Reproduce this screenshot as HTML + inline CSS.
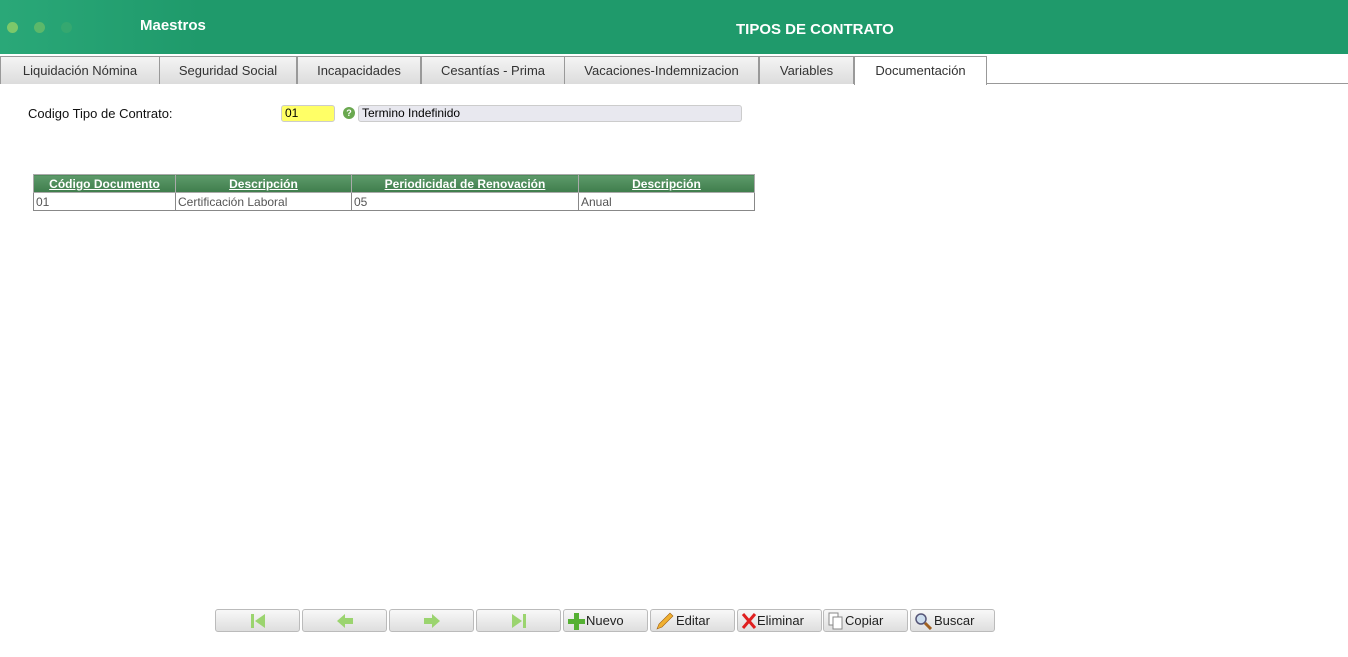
<!DOCTYPE html>
<html><head><meta charset="utf-8"><style>
*{margin:0;padding:0;box-sizing:border-box}
body{width:1348px;height:657px;background:#fff;font-family:"Liberation Sans",sans-serif;position:relative;overflow:hidden}
.hdr{position:absolute;left:0;top:0;width:1348px;height:54px;background:linear-gradient(90deg,#2aa878 0,#1f9a6b 200px,#1f9a6b);}
.dot{position:absolute;top:22px;width:11px;height:11px;border-radius:50%}
.hdr .t1{position:absolute;left:140px;top:17px;color:#fff;font-weight:bold;font-size:15px}
.hdr .t2{position:absolute;left:736px;top:21px;color:#fff;font-weight:bold;font-size:15px}
.tab{position:absolute;top:56px;height:28px;border:1px solid #999;border-bottom:none;background:linear-gradient(#f4f4f4,#dcdcdc);font-size:13px;color:#333;text-align:center;line-height:27px}
.line{position:absolute;left:0;top:83px;width:1348px;height:1px;background:#999}
.lbl{position:absolute;left:28px;top:106px;font-size:13px;color:#111}
.inp{position:absolute;left:281px;top:105px;width:54px;height:17px;background:#ffff66;border:1px solid #ccc;border-radius:3px;font-size:12px;padding-left:3px;line-height:15px}
.q{position:absolute;left:343px;top:107px;width:12px;height:12px;border-radius:50%;background:#6aa84f;color:#fff;font-size:9px;font-weight:bold;text-align:center;line-height:12px}
.desc{position:absolute;left:358px;top:105px;width:384px;height:17px;background:#e8e8ef;border:1px solid #ccc;border-radius:3px;font-size:12px;padding-left:3px;line-height:15px}
table{position:absolute;left:33px;top:174px;border-collapse:collapse;width:722px;font-size:12px}
th{background:linear-gradient(#5d9a6a,#3f7d4c);color:#fff;text-decoration:underline;font-weight:bold;height:18px;border:1px solid #aaa}
td{border:1px solid #888;height:18px;color:#555;padding-left:2px}
.btn{position:absolute;top:609px;width:85px;height:23px;border:1px solid #bbb;border-radius:3px;background:linear-gradient(#f8f8f8,#dedede);font-size:13px;color:#222;line-height:21px;display:flex;align-items:center;justify-content:center}
.btn.l{justify-content:flex-start;padding-left:3px}
</style></head><body>
<div class="hdr">
<div class="dot" style="left:7px;background:#7cc86a"></div>
<div class="dot" style="left:34px;background:#5cb86a"></div>
<div class="dot" style="left:61px;background:#35a870"></div>
<div class="t1">Maestros</div><div class="t2">TIPOS DE CONTRATO</div>
</div>
<div class="line"></div>
<div class="tab" style="left:0;width:160px">Liquidación Nómina</div>
<div class="tab" style="left:159px;width:138px">Seguridad Social</div>
<div class="tab" style="left:297px;width:124px">Incapacidades</div>
<div class="tab" style="left:421px;width:144px">Cesantías - Prima</div>
<div class="tab" style="left:564px;width:195px">Vacaciones-Indemnizacion</div>
<div class="tab" style="left:759px;width:95px">Variables</div>
<div class="tab" style="left:854px;width:133px;background:#fff;height:29px">Documentación</div>
<div class="lbl">Codigo Tipo de Contrato:</div>
<div class="inp">01</div><div class="q">?</div><div class="desc">Termino Indefinido</div>
<table><tr><th style="width:142px">Código Documento</th><th style="width:176px">Descripción</th><th style="width:227px">Periodicidad de Renovación</th><th>Descripción</th></tr>
<tr><td>01</td><td>Certificación Laboral</td><td>05</td><td>Anual</td></tr></table>
<div class="btn" style="left:215px"><svg width="18" height="16"><rect x="2" y="1" width="3" height="14" fill="#9bd46f"/><path d="M16 1L6 8L16 15Z" fill="#9bd46f"/></svg></div>
<div class="btn" style="left:302px"><svg width="18" height="16"><path d="M1 8L9 1V5H17V11H9V15Z" fill="#9bd46f"/></svg></div>
<div class="btn" style="left:389px"><svg width="18" height="16"><path d="M17 8L9 1V5H1V11H9V15Z" fill="#9bd46f"/></svg></div>
<div class="btn" style="left:476px"><svg width="18" height="16"><path d="M2 1L12 8L2 15Z" fill="#9bd46f"/><rect x="13" y="1" width="3" height="14" fill="#9bd46f"/></svg></div>
<div class="btn l" style="left:563px"><svg width="19" height="18"><path d="M7 1H12V7H18V12H12V18H7V12H1V7H7Z" fill="#55b033"/></svg>Nuevo</div>
<div class="btn l" style="left:650px"><svg width="22" height="18"><path d="M3 17L5 12L16 1L19 4L8 15Z" fill="#f0b030" stroke="#a06010" stroke-width=".6"/></svg>Editar</div>
<div class="btn l" style="left:737px"><svg width="16" height="18"><path d="M2 2L14 16M14 2L2 16" stroke="#e02020" stroke-width="3"/></svg>Eliminar</div>
<div class="btn l" style="left:823px"><svg width="18" height="18"><rect x="2" y="1" width="9" height="12" fill="#fff" stroke="#888"/><rect x="6" y="5" width="9" height="12" fill="#fff" stroke="#888"/></svg>Copiar</div>
<div class="btn l" style="left:910px"><svg width="20" height="18"><circle cx="7" cy="7" r="5" fill="#cde" stroke="#557" stroke-width="1.5"/><path d="M11 11L17 17" stroke="#a06020" stroke-width="3"/></svg>Buscar</div>
</body></html>
